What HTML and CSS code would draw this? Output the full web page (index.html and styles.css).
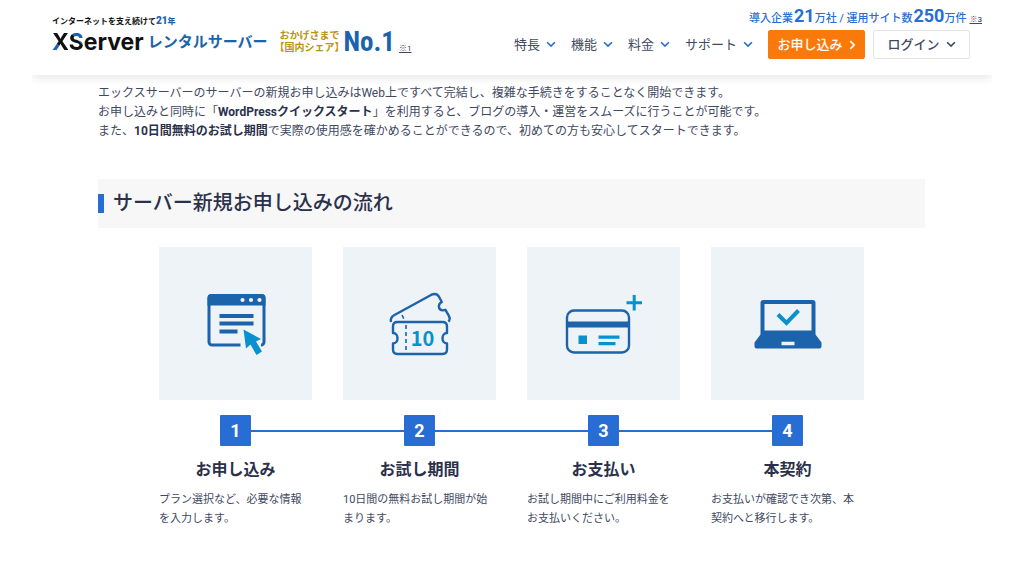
FILE: index.html
```html
<!DOCTYPE html>
<html lang="ja">
<head>
<meta charset="utf-8">
<meta name="viewport" content="width=device-width, initial-scale=1">
<title>サーバー新規お申し込みの流れ</title>
<link rel="stylesheet" href="styles.css">
</head>
<body>
<div class="page">
  <header class="header">
    <div class="brand">
      <p class="tagline">インターネットを支え続けて<b class="tagline-year"><span class="tagline-num">21</span>年</b></p>
      <div class="brand-row">
        <a class="logo" href="#"><span class="logo-name"><span class="logo-x">X</span><span class="logo-s">S</span>erver</span><span class="logo-product">レンタルサーバー</span></a>
        <p class="share">おかげさまで<br>【国内シェア】</p>
        <strong class="rank">No.1</strong>
        <a class="note" href="#">※1</a>
      </div>
    </div>
    <div class="header-side">
      <p class="stats"><span>導入企業</span><b>21</b><span>万社 / 運用サイト数</span><b>250</b><span>万件</span><a class="note stats-note" href="#">※3</a></p>
      <nav class="nav">
        <a class="nav-link" href="#">特長<svg class="chevron" viewBox="0 0 9 6"><path d="M1 1l3.500 3.500L8 1"/></svg></a>
        <a class="nav-link" href="#">機能<svg class="chevron" viewBox="0 0 9 6"><path d="M1 1l3.500 3.500L8 1"/></svg></a>
        <a class="nav-link" href="#">料金<svg class="chevron" viewBox="0 0 9 6"><path d="M1 1l3.500 3.500L8 1"/></svg></a>
        <a class="nav-link" href="#">サポート<svg class="chevron" viewBox="0 0 9 6"><path d="M1 1l3.500 3.500L8 1"/></svg></a>
        <div class="actions">
          <a class="button button-apply" href="#">お申し込み<svg class="chevron-right" viewBox="0 0 6 9"><path d="M1 1l3.500 3.500L1 8"/></svg></a>
          <button class="button button-login" type="button">ログイン<svg class="chevron" viewBox="0 0 9 6"><path d="M1 1l3.500 3.500L8 1"/></svg></button>
        </div>
      </nav>
    </div>
  </header>

  <main class="main">
    <p class="intro">エックスサーバーのサーバーの新規お申し込みはWeb上ですべて完結し、複雑な手続きをすることなく開始できます。<br>お申し込みと同時に「<strong>WordPressクイックスタート</strong>」を利用すると、ブログの導入・運営をスムーズに行うことが可能です。<br>また、<strong>10日間無料のお試し期間</strong>で実際の使用感を確かめることができるので、初めての方も安心してスタートできます。</p>

    <h2 class="heading">サーバー新規お申し込みの流れ</h2>

    <ol class="steps">
      <li class="step">
        <div class="tile">
          <svg class="icon" viewBox="-4.500 -1.500 100 90">
            <path d="M50 64.500H21.500a3 3 0 0 1-3-3V18a3 3 0 0 1 3-3h49a3 3 0 0 1 3 3v43.500a3 3 0 0 1-3 3" fill="none" stroke="#1b63ab" stroke-width="3"/>
            <path d="M17 25V17a3.500 3.500 0 0 1 3.500-3.500h51A3.500 3.500 0 0 1 75 17v8z" fill="#1b63ab"/>
            <path d="M29 35.500h34M29 43h34M29 51h18" stroke="#1b63ab" stroke-width="3.800"/>
            <g fill="#eef3f8"><circle cx="52" cy="19.500" r="2.100"/><circle cx="60.500" cy="19.500" r="2.100"/><circle cx="69" cy="19.500" r="2.100"/></g>
            <path d="M53 49l2.500 19 4.500-4 6 10.500 5.500-3.500-6-10 5-2.500z" fill="#0891ce"/>
          </svg>
        </div>
        <span class="number">1</span>
        <h3 class="step-title">お申し込み</h3>
        <p class="step-text">プラン選択など、必要な情報を入力します。</p>
      </li>
      <li class="step">
        <div class="tile">
          <svg class="icon" viewBox="-.5 -1.500 100 90">
            <g fill="none" stroke="#1b63ab" stroke-width="2.400" stroke-linejoin="round">
              <path d="M20.500 41.500c-.8-3.500.7-5.500 3.500-7l37-20.300q5-2.300 7.500 2l2.800 5.300c-4 2-4 7.500.5 8.300q1.500.2 3-.6l3.600 6.200q1.700 3-.3 5.800"/>
              <path d="M27 41.500h45q4.500 0 4.500 4.500v6.500c-6 0-6 10.500 0 10.500v6q0 4.500-4.500 4.500H27q-4.500 0-4.500-4.500v-6c6 0 6-10.500 0-10.500V46q0-4.500 4.500-4.500z"/>
            </g>
            <path d="M31.500 34.500l2 4M35.500 44.500v26" fill="none" stroke="#1b63ab" stroke-width="1.600" stroke-dasharray="4 3"/>
            <text class="ticket-days" x="52" y="65" text-anchor="middle">10</text>
          </svg>
        </div>
        <span class="number">2</span>
        <h3 class="step-title">お試し期間</h3>
        <p class="step-text">10日間の無料お試し期間が始まります。</p>
      </li>
      <li class="step">
        <div class="tile">
          <svg class="icon" viewBox="3.500 -1.500 100 90">
            <rect x="16.500" y="30" width="62" height="42" rx="7" fill="none" stroke="#1b63ab" stroke-width="2.400"/>
            <path d="M16 41h63v6H16z" fill="#1b63ab"/>
            <path d="M28 55h8.500v8.500H28zM48 55h21v3.200H48zM48 61.500h17v3.200H48zM76 20.800h6.200v-6.300h3v6.300h6.300v3h-6.300V30h-3v-6.200H76z" fill="#0891ce"/>
          </svg>
        </div>
        <span class="number">3</span>
        <h3 class="step-title">お支払い</h3>
        <p class="step-text">お試し期間中にご利用料金をお支払いください。</p>
      </li>
      <li class="step">
        <div class="tile">
          <svg class="icon" viewBox="-3 -1.500 100 90">
            <path d="M22.500 19.500h49a3 3 0 0 1 3 3V54l6 8v4a2 2 0 0 1-2 2h-63a2 2 0 0 1-2-2v-4l6-8V22.500a3 3 0 0 1 3-3z" fill="#1b63ab"/>
            <path d="M23.500 23.500h47V50h-47zM40.500 61.300h13v3.400h-13z" fill="#eef3f8"/>
            <path d="M37 34l8.500 8.500L57.500 30" fill="none" stroke="#0891ce" stroke-width="4"/>
          </svg>
        </div>
        <span class="number">4</span>
        <h3 class="step-title">本契約</h3>
        <p class="step-text">お支払いが確認でき次第、本契約へと移行します。</p>
      </li>
    </ol>
  </main>
</div>
</body>
</html>
```
FILE: styles.css
```css
* {
  box-sizing: border-box;
}

body,
p,
h2,
h3,
ol {
  margin: 0;
  padding: 0;
}

body {
  background: #fff;
  color: #414962;
  font-family: Roboto, "Noto Sans CJK JP", sans-serif;
  font-size: 12px;
  line-height: 19px;
}

a {
  color: inherit;
  text-decoration: none;
}

.page {
  margin: 0 32px;
}

.header {
  display: flex;
  justify-content: space-between;
  padding: 6px 10px 16px 20px;
  background: #fff;
  box-shadow: 0 4px 8px rgba(0, 0, 0, 0.08);
  clip-path: inset(0 0 -14px 0);
}

.brand {
  padding-top: 10px;
}

.tagline {
  color: #111;
  font-size: 8px;
  font-weight: 700;
  line-height: 10px;
}

.tagline-year {
  color: #1b63ab;
}

.tagline-num {
  font-size: 10px;
}

.brand-row {
  display: flex;
  align-items: center;
  height: 30px;
}

.logo {
  display: flex;
  align-items: center;
}

.logo-name {
  color: #111;
  font-family: Inter, sans-serif;
  font-size: 23px;
  font-weight: 700;
  line-height: 30px;
}

.logo-x,
.logo-s {
  background: linear-gradient(45deg, #1b63ab 38%, #111 38%);
  background-clip: text;
  -webkit-background-clip: text;
  color: transparent;
}

.logo-s {
  background-image: linear-gradient(225deg, #1b63ab 42%, #111 42%);
}

.logo-product {
  margin-left: 4px;
  color: #1b63ab;
  font-size: 15px;
  font-weight: 700;
}

.share {
  margin-left: 12px;
  color: #b99412;
  font-size: 10px;
  font-weight: 700;
  line-height: 12px;
  font-feature-settings: "halt";
}

.rank {
  margin-left: 4px;
  color: #1b63ab;
  font-family: "Roboto Condensed", "Liberation Sans Narrow", Roboto, sans-serif;
  font-size: 27px;
  line-height: 30px;
}

.note {
  align-self: flex-end;
  margin-left: 4px;
  color: #414962;
  font-size: 8px;
  line-height: 16px;
  text-decoration: underline;
}

.header-side {
  display: flex;
  flex-direction: column;
}

.stats {
  display: flex;
  align-items: baseline;
  justify-content: flex-end;
  height: 24px;
  color: #286dd3;
  font-size: 11px;
  font-weight: 500;
}

.stats b {
  margin: 0 0 0 1px;
  font-size: 18px;
}

.stats-note {
  align-self: baseline;
  margin-left: 3px;
}

.nav {
  display: flex;
  align-items: center;
  gap: 15px;
  margin-right: 12px;
  font-size: 13px;
}

.nav-link {
  display: flex;
  align-items: center;
  gap: 6px;
}

.chevron,
.chevron-right {
  flex: none;
  width: 10px;
  height: 7px;
  fill: none;
  stroke: #286dd3;
  stroke-width: 1.5;
}

.chevron-right {
  width: 7px;
  height: 10px;
  stroke: #fff;
}

.actions {
  display: flex;
  gap: 8px;
}

.button {
  display: flex;
  align-items: center;
  justify-content: center;
  gap: 6px;
  width: 97px;
  height: 29px;
  padding: 0;
  border: 1px solid #e4e5e8;
  border-radius: 2px;
  background: #fff;
  color: #414962;
  font: inherit;
  font-weight: 500;
}

.button-apply {
  border-color: #f97a0b;
  background: #f97a0b;
  color: #fff;
}

.button-login .chevron {
  stroke: #414962;
}

.main {
  padding: 9px 67px 40px 66px;
}

.intro strong {
  color: #2b314b;
}

.heading {
  display: flex;
  align-items: center;
  gap: 9px;
  margin-top: 38px;
  padding: 10px 0;
  background: #f7f7f7;
  color: #2b314b;
  font-size: 20px;
  font-weight: 500;
  line-height: 29px;
}

.heading::before {
  content: "";
  width: 6px;
  height: 19px;
  background: #286dd3;
}

.steps {
  display: grid;
  grid-template-columns: repeat(4, 1fr);
  gap: 31px;
  max-width: 705px;
  margin: 19px auto 0;
  list-style: none;
}

.step {
  position: relative;
  display: flex;
  flex-direction: column;
  align-items: center;
}

.step:not(:last-child)::after {
  content: "";
  position: absolute;
  top: 183px;
  left: 50%;
  width: calc(100% + 31px);
  height: 2px;
  background: #286dd3;
}

.tile {
  display: flex;
  align-items: center;
  justify-content: center;
  width: 100%;
  height: 153px;
  background: #eef3f8;
}

.icon {
  width: 100px;
  height: 90px;
}

.ticket-days {
  fill: #0891ce;
  font-family: "Noto Sans CJK JP", sans-serif;
  font-size: 20px;
  font-weight: 700;
}

.number {
  position: relative;
  z-index: 1;
  width: 31px;
  margin-top: 15px;
  border-radius: 1px;
  background: #286dd3;
  color: #fff;
  font-size: 18px;
  font-weight: 700;
  line-height: 31px;
  text-align: center;
}

.step-title {
  margin-top: 12px;
  color: #2b314b;
  font-size: 16px;
  font-weight: 700;
  line-height: 24px;
}

.step-text {
  align-self: stretch;
  margin-top: 8px;
  font-size: 11px;
}
```
